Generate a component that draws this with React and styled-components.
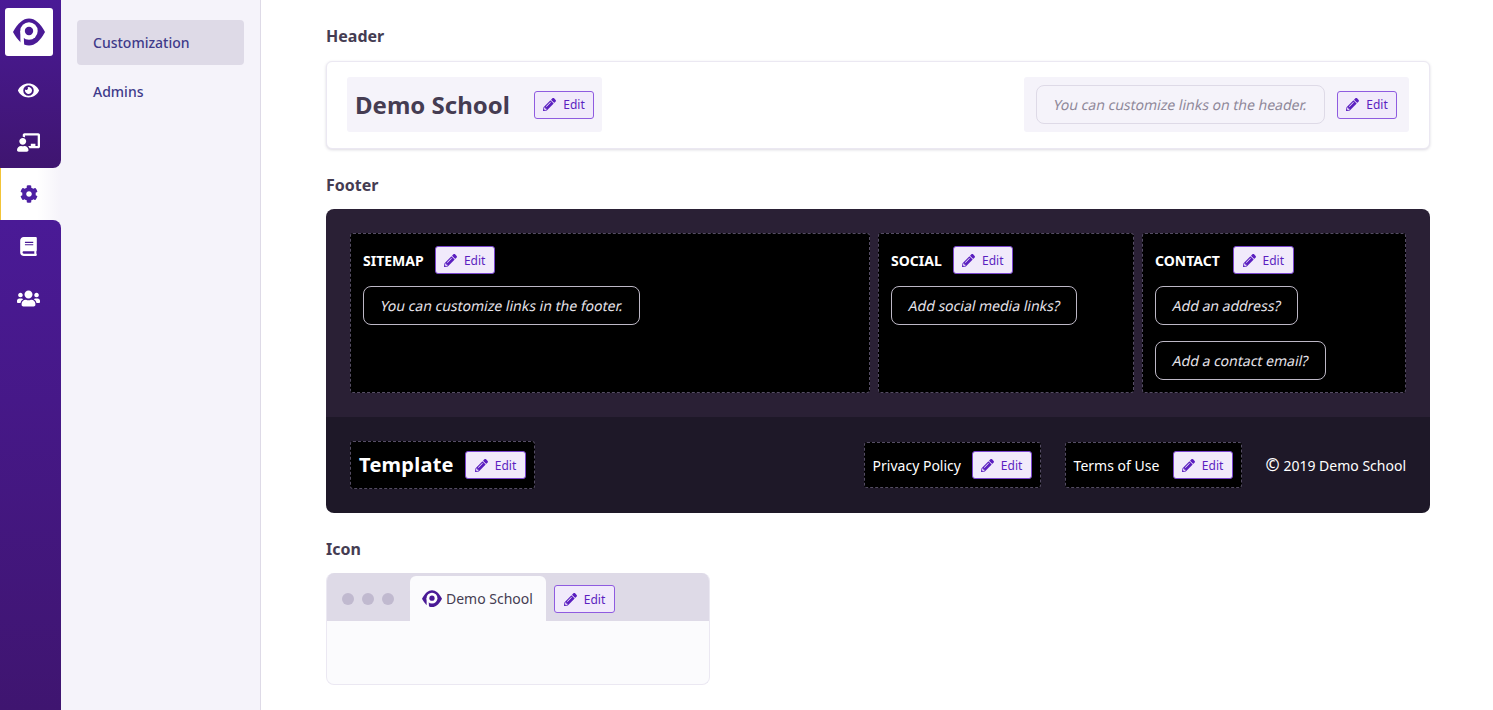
import React from "react";
import styled, { createGlobalStyle } from "styled-components";
import { FaEye, FaChalkboardTeacher, FaCog, FaBook, FaUsers, FaPencilAlt } from "react-icons/fa";

const Global = createGlobalStyle`
  html, body { margin: 0; padding: 0; background: #fff; }
  body { font-family: "Noto Sans", "Open Sans", sans-serif; color: #453c52; }
  * { box-sizing: border-box; }
`;

const Page = styled.div`
  display: flex;
  height: 710px;
  overflow: hidden;
`;

const Rail = styled.nav`
  width: 61px;
  flex: none;
  display: flex;
  flex-direction: column;
  background: #f5f3fa;
`;

const RailBlock = styled.div`
  background: linear-gradient(180deg, #4a1a96 0%, #3f1570 100%);
  display: flex;
  flex-direction: column;
  align-items: center;
  border-radius: ${(p) => (p.$top ? "0 0 8px 0" : "0 8px 0 0")};
  height: ${(p) => (p.$top ? "168px" : "auto")};
  flex: ${(p) => (p.$top ? "none" : "1")};
  padding: ${(p) => (p.$top ? "8px" : "0")} 4px 0 0;
`;

const LogoBox = styled.div`
  width: 48px;
  height: 48px;
  margin-left: 1px;
  background: #fff;
  border-radius: 3px;
  display: flex;
  align-items: center;
  justify-content: center;
  margin-bottom: 8px;
`;

const RailItem = styled.div`
  width: 100%;
  height: 52px;
  display: flex;
  align-items: center;
  justify-content: center;
  color: #fff;
  font-size: ${(p) => p.$size || 22}px;
`;

const ActiveRailItem = styled(RailItem)`
  background: linear-gradient(90deg, #fff 0%, #fff 60%, #f5f3fa 100%);
  border-left: 1px solid #f2c438;
  color: #4d1fa3;
  padding-right: 5px;
`;

const SubNav = styled.aside`
  width: 200px;
  flex: none;
  background: #f5f3fa;
  border-right: 1px solid #dedae7;
  padding: 20px 16px 0;
`;

const SubItem = styled.div`
  height: 45px;
  width: 167px;
  margin-bottom: 4px;
  padding-left: 16px;
  display: flex;
  align-items: center;
  border-radius: 4px;
  font-size: 14px;
  font-weight: 500;
  color: #403a8a;
  background: ${(p) => (p.$active ? "#dedae7" : "transparent")};
`;

const Main = styled.main`
  flex: 1;
  padding: 25px 63px 0 65px;
  min-width: 0;
`;

const SectionTitle = styled.h2`
  margin: 0 0 13px;
  font-size: 16px;
  line-height: 22px;
  font-weight: 700;
  color: #453c52;
`;

const HeaderCard = styled.section`
  height: 88px;
  margin: 14px 0 25px;
  border: 1px solid #ebe8f2;
  border-radius: 6px;
  box-shadow: 0 1px 3px rgba(60, 50, 90, 0.18);
  background: #fff;
  padding: 15px 20px;
  display: flex;
  justify-content: space-between;
`;

const HeaderTitle = styled(SectionTitle)`
  margin-bottom: 0;
`;

const HeaderGroup = styled.div`
  height: 55px;
  background: #f5f3fa;
  border-radius: 3px;
  display: flex;
  align-items: center;
  gap: ${(p) => p.$gap}px;
  padding: 0 ${(p) => p.$pad}px;
`;

const SchoolName = styled.div`
  width: 155px;
  white-space: nowrap;
  font-size: 24px;
  font-weight: 700;
  color: #453c52;
`;

const Oblique = styled.span`
  display: inline-block;
  transform: skewX(-12deg);
  font-style: normal;
`;

const Hint = styled.div`
  height: 39px;
  width: 289px;
  border: 1px solid #dedae7;
  border-radius: 8px;
  display: flex;
  align-items: center;
  padding-left: 17px;
  white-space: nowrap;
  font-size: 14px;
  color: #8f8899;
`;

const EditButton = styled.button`
  flex: none;
  height: 28px;
  width: ${(p) => p.$w || 60}px;
  padding: 0;
  border-radius: 3px;
  border: 1px solid ${(p) => (p.$dark ? "#7a45cf" : "#8f5be0")};
  background: #f1eafb;
  color: #5b1fc0;
  font-family: inherit;
  font-size: 12px;
  font-weight: 400;
  display: inline-flex;
  align-items: center;
  justify-content: center;
  gap: 7px;
  svg { font-size: 13px; }
`;

const Edit = (p) => (
  <EditButton {...p}>
    <FaPencilAlt />
    Edit
  </EditButton>
);

const Footer = styled.section`
  border-radius: 8px;
  overflow: hidden;
  margin-bottom: 25px;
`;

const FooterTop = styled.div`
  height: 208px;
  background: #2a2035;
  padding: 24px;
  display: grid;
  grid-template-columns: 520px 256px 264px;
  gap: 8px;
`;

const DashedBox = styled.div`
  background: #000;
  border: 1px dashed #544c63;
  border-radius: 3px;
`;

const Column = styled(DashedBox)`
  padding: 12px 12px;
  height: 160px;
`;

const ColumnHead = styled.div`
  display: flex;
  align-items: center;
  gap: ${(p) => p.$gap || 11}px;
  margin-bottom: 12px;
`;

const ColumnTitle = styled.div`
  color: #fff;
  font-size: 14px;
  font-weight: 700;
`;

const Pill = styled.div`
  width: fit-content;
  height: 39px;
  padding: 0 16px 0 17px;
  border: 1px solid #bdb8c6;
  border-radius: 8px;
  display: flex;
  align-items: center;
  color: #e6e3ea;
  font-size: 14px;
  white-space: nowrap;
  margin-bottom: 16px;
`;

const FooterBottom = styled.div`
  height: 96px;
  background: #1e1828;
  padding: 0 24px;
  display: flex;
  align-items: center;
  color: #fff;
`;

const BottomBox = styled(DashedBox)`
  display: flex;
  align-items: center;
  justify-content: space-between;
  height: ${(p) => p.$h}px;
  width: ${(p) => p.$w}px;
  padding: 0 8px;
  margin-right: ${(p) => p.$mr || 0}px;
`;

const Brand = styled.div`
  font-size: 20px;
  font-weight: 700;
  letter-spacing: 0.25px;
  color: #fff;
  padding-bottom: 2px;
`;

const LegalLink = styled.div`
  font-size: 14px;
  color: #fff;
`;

const Spacer = styled.div`
  flex: 1;
`;

const Copyright = styled.div`
  font-size: 14px;
  color: #fff;
  white-space: nowrap;
`;

const CopyMark = styled.span`
  font-size: 17px;
  line-height: 14px;
  font-weight: 600;
`;

const BrowserPreview = styled.section`
  width: 384px;
  height: 112px;
  border: 1px solid #ebe8f2;
  border-top: none;
  border-radius: 8px;
  background: #fbfbfd;
  overflow: hidden;
`;

const TabBar = styled.div`
  height: 48px;
  margin: 0 -1px;
  background: #dedae7;
  display: flex;
  align-items: flex-end;
  padding-left: 16px;
`;

const Dots = styled.div`
  display: flex;
  gap: 8px;
  width: 68px;
  height: 12px;
  margin-bottom: 16px;
`;

const Dot = styled.span`
  width: 12px;
  height: 12px;
  border-radius: 50%;
  background: #c0b9cf;
`;

const Tab = styled.div`
  width: 136px;
  height: 45px;
  background: #fbfbfd;
  border-radius: 6px 6px 0 0;
  display: flex;
  align-items: center;
  gap: 4px;
  padding-left: 12px;
  font-size: 14px;
  color: #453c52;
  white-space: nowrap;
`;

const TabEdit = styled.div`
  margin: 0 0 8px 8px;
  display: flex;
`;

const Logo = ({ size, color = "#4a1a96", bg = "#fff" }) => (
  <svg width={size} height={size * 0.875} viewBox="0 0 32 28" aria-hidden="true">
    <path d="M0 14 C5 5 10 0.5 16 0.5 C22 0.5 27 5 32 14 C27 23 22 27.5 16 27.5 C10 27.5 5 23 0 14 Z" fill={color} />
    <circle cx="16" cy="13" r="8.7" fill={bg} />
    <path d="M7.3 13 H10.5 L11.2 28 H7.5 Z" fill={bg} />
    <circle cx="16" cy="13" r="4.2" fill={color} />
  </svg>
);

export default function App() {
  return (
    <Page>
      <Global />
      <Rail>
        <RailBlock $top>
          <LogoBox>
            <Logo size={32} />
          </LogoBox>
          <RailItem $size={21}><FaEye /></RailItem>
          <RailItem $size={23}><FaChalkboardTeacher /></RailItem>
        </RailBlock>
        <ActiveRailItem $size={18}><FaCog /></ActiveRailItem>
        <RailBlock>
          <RailItem $size={19}><FaBook /></RailItem>
          <RailItem $size={23}><FaUsers /></RailItem>
        </RailBlock>
      </Rail>
      <SubNav>
        <SubItem $active>Customization</SubItem>
        <SubItem>Admins</SubItem>
      </SubNav>
      <Main>
        <HeaderTitle>Header</HeaderTitle>
        <HeaderCard>
          <HeaderGroup $pad={8} $gap={24}>
            <SchoolName>Demo School</SchoolName>
            <Edit />
          </HeaderGroup>
          <HeaderGroup $pad={12} $gap={12}>
            <Hint><Oblique>You can customize links on the header.</Oblique></Hint>
            <Edit />
          </HeaderGroup>
        </HeaderCard>

        <SectionTitle>Footer</SectionTitle>
        <Footer>
          <FooterTop>
            <Column>
              <ColumnHead>
                <ColumnTitle>SITEMAP</ColumnTitle>
                <Edit $dark />
              </ColumnHead>
              <Pill><Oblique>You can customize links in the footer.</Oblique></Pill>
            </Column>
            <Column>
              <ColumnHead>
                <ColumnTitle>SOCIAL</ColumnTitle>
                <Edit $dark />
              </ColumnHead>
              <Pill><Oblique>Add social media links?</Oblique></Pill>
            </Column>
            <Column>
              <ColumnHead $gap={13}>
                <ColumnTitle>CONTACT</ColumnTitle>
                <Edit $dark $w={61} />
              </ColumnHead>
              <Pill><Oblique>Add an address?</Oblique></Pill>
              <Pill><Oblique>Add a contact email?</Oblique></Pill>
            </Column>
          </FooterTop>
          <FooterBottom>
            <BottomBox $h={48} $w={185}>
              <Brand>Template</Brand>
              <Edit $dark $w={61} />
            </BottomBox>
            <Spacer />
            <BottomBox $h={46} $w={177} $mr={24}>
              <LegalLink>Privacy Policy</LegalLink>
              <Edit $dark />
            </BottomBox>
            <BottomBox $h={46} $w={177} $mr={24}>
              <LegalLink>Terms of Use</LegalLink>
              <Edit $dark />
            </BottomBox>
            <Copyright><CopyMark>©</CopyMark> 2019 Demo School</Copyright>
          </FooterBottom>
        </Footer>

        <SectionTitle>Icon</SectionTitle>
        <BrowserPreview>
          <TabBar>
            <Dots>
              <Dot />
              <Dot />
              <Dot />
            </Dots>
            <Tab>
              <Logo size={20} />
              Demo School
            </Tab>
            <TabEdit>
              <Edit $w={61} />
            </TabEdit>
          </TabBar>
        </BrowserPreview>
      </Main>
    </Page>
  );
}
